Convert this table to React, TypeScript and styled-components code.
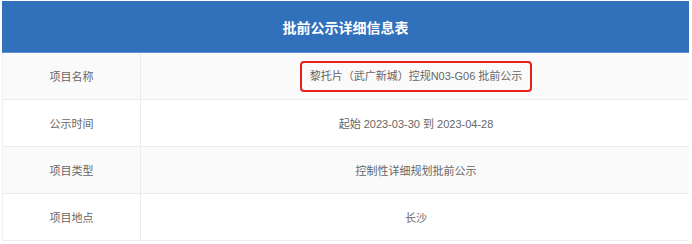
import React from "react";
import styled, { createGlobalStyle } from "styled-components";

const GlobalStyle = createGlobalStyle`
  body {
    margin: 0;
    background: #fff;
    font-family: "Liberation Sans", "Noto Sans CJK SC", sans-serif;
  }
`;

const rows = [
  { label: "项目名称", value: "黎托片（武广新城）控规N03-G06 批前公示", marked: true },
  { label: "公示时间", value: "起始 2023-03-30 到 2023-04-28" },
  { label: "项目类型", value: "控制性详细规划批前公示" },
  { label: "项目地点", value: "长沙" },
];

const App: React.FC = () => {
  return (
    <>
      <GlobalStyle />
      <Wrapper>
        <Table>
          <Header>批前公示详细信息表</Header>
          {rows.map((r, i) => (
            <Row key={r.label} $striped={i % 2 === 0}>
              <Label>{r.label}</Label>
              <Value>
                {r.marked ? <Marked>{r.value}</Marked> : r.value}
              </Value>
            </Row>
          ))}
        </Table>
      </Wrapper>
    </>
  );
};

const Wrapper = styled.div`
  padding: 1px 3px 0 2px;
`;

const Table = styled.div`
  width: 687px;
  display: flex;
  flex-direction: column;
`;

const Header = styled.div`
  height: 52px;
  background: #3170bb;
  color: #fff;
  font-size: 14px;
  font-weight: bold;
  display: flex;
  align-items: center;
  justify-content: center;
  border-bottom: 1px solid #5b8fd0;
  box-sizing: border-box;
`;

const Row = styled.div<{ $striped: boolean }>`
  height: 47px;
  display: grid;
  grid-template-columns: 138px 1fr;
  background: ${(p) => (p.$striped ? "#fafafa" : "#fff")};
  border-bottom: 1px solid #ececec;
  border-left: 1px solid #f0f0f0;
  box-sizing: border-box;
  font-size: 11px;
  color: #666;
`;

const Label = styled.div`
  display: flex;
  align-items: center;
  justify-content: center;
  border-right: 1px solid #ececec;
`;

const Value = styled.div`
  display: flex;
  align-items: center;
  justify-content: center;
  padding-left: 2px;
`;

const Marked = styled.span`
  border: 2px solid #e8201c;
  border-radius: 4px;
  padding: 6px 8px;
  line-height: 15px;
`;

export default App;
